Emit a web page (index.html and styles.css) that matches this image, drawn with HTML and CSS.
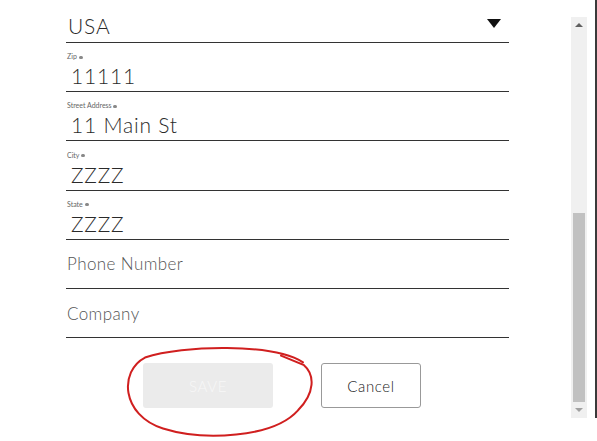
FILE: index.html
```html
<!doctype html>
<html>

<head>
    <meta charset="utf-8">
    <title>Address Form</title>
    <meta name="viewport" content="width=device-width,initial-scale=1">
    <link rel="stylesheet" href="styles.css">
</head>

<body>
    <div class="modal">
        <div class="content">
            <form class="form">
                <div class="field field-select">
                    <span class="value">USA</span>
                    <span class="caret"></span>
                </div>
                <div class="field">
                    <label class="label">Zip <span class="req"></span></label>
                    <span class="value">11111</span>
                </div>
                <div class="field">
                    <label class="label">Street Address <span class="req"></span></label>
                    <span class="value">11 Main St</span>
                </div>
                <div class="field">
                    <label class="label">City <span class="req"></span></label>
                    <span class="value">ZZZZ</span>
                </div>
                <div class="field">
                    <label class="label">State <span class="req"></span></label>
                    <span class="value">ZZZZ</span>
                </div>
                <div class="field field-empty">
                    <span class="placeholder">Phone Number</span>
                </div>
                <div class="field field-empty">
                    <span class="placeholder">Company</span>
                </div>

                <div class="actions">
                    <button type="button" class="btn btn-save" disabled>SAVE</button>
                    <button type="button" class="btn btn-cancel">Cancel</button>
                    <!-- hand drawn annotation round the save button -->
                    <svg class="scribble" viewBox="0 0 200 100" preserveAspectRatio="none" aria-hidden="true">
                        <path d="M180 17 C150 -3, 60 -1, 22 12 C-4 26, -2 72, 40 86 C80 99, 150 96, 175 67 C192 49, 192 30, 181 20 L158 10" />
                    </svg>
                </div>
            </form>
        </div>

        <div class="scrollbar">
            <span class="arrow arrow-up"></span>
            <div class="track">
                <div class="thumb"></div>
            </div>
            <span class="arrow arrow-down"></span>
        </div>
    </div>
</body>

</html>
```

FILE: styles.css
```css
body {
    margin: 0;
    width: 597px;
    height: 441px;
    overflow: hidden;
    background: #fff;
    font-family: Lato, "DejaVu Sans", sans-serif;
    color: #222;
}

.modal {
    display: flex;
    height: 418px;
    border-right: 2px solid #3a3a3a;
}

.content {
    flex: 1;
    padding-left: 66px;
    padding-right: 62px;
}

.form {
    width: 443px;
}

.field {
    display: flex;
    flex-direction: column;
    justify-content: flex-end;
    height: 48.2px;
    border-bottom: 1px solid #333;
}

.field-select {
    height: 42px;
    flex-direction: row;
    align-items: flex-end;
    justify-content: space-between;
}

.field-select .value {
    padding-left: 2px;
    padding-bottom: 1px;
}

.caret {
    width: 0;
    height: 0;
    border-left: 7px solid transparent;
    border-right: 7px solid transparent;
    border-top: 9px solid #111;
    margin-right: 8px;
    margin-bottom: 14px;
}

.label {
    font-size: 7px;
    color: #666;
    line-height: 10px;
    padding-left: 1px;
}

.req {
    display: inline-block;
    width: 4px;
    height: 3px;
    border-radius: 2px;
    background: #888;
    vertical-align: middle;
}

.value {
    font-size: 21px;
    font-weight: 300;
    line-height: 30px;
    padding-left: 5px;
    padding-bottom: 0;
    color: #2a2a2a;
    letter-spacing: 0.8px;
}

.field-empty {
    justify-content: center;
}

.placeholder {
    font-size: 17px;
    font-weight: 300;
    color: #555;
    letter-spacing: 0.4px;
    padding-left: 1px;
    padding-top: 0;
}

.actions {
    position: relative;
    display: flex;
    gap: 48px;
    padding-top: 25px;
    padding-left: 77px;
}

.btn {
    height: 45px;
    border-radius: 3px;
    font-family: Lato, "DejaVu Sans", sans-serif;
    font-size: 15px;
    font-weight: 300;
    letter-spacing: 0.6px;
    cursor: pointer;
}

.btn-save {
    width: 130px;
    background: #ebebeb;
    color: #f7f7f7;
    border: none;
}

.btn-cancel {
    width: 100px;
    background: #fff;
    color: #222;
    border: 1px solid #999;
}

.scribble {
    position: absolute;
    left: 57px;
    top: 8px;
    width: 200px;
    height: 96px;
    overflow: visible;
}

.scribble path {
    fill: none;
    stroke: #d01f1f;
    stroke-width: 2;
    stroke-linecap: round;
    vector-effect: non-scaling-stroke;
}

/* fake scrollbar */
.scrollbar {
    width: 16px;
    margin-top: 17px;
    margin-right: 8px;
    background: #f0f0f0;
    display: flex;
    flex-direction: column;
    align-items: center;
}

.track {
    flex: 1;
    width: 100%;
    display: flex;
    flex-direction: column;
    justify-content: flex-end;
    padding: 0 2px;
    box-sizing: border-box;
}

.thumb {
    height: 189px;
    background: #c1c1c1;
}

.arrow {
    width: 0;
    height: 0;
    border-left: 4px solid transparent;
    border-right: 4px solid transparent;
    margin: 6px 0;
}

.arrow-up {
    border-bottom: 4px solid #606060;
}

.arrow-down {
    border-top: 4px solid #a0a0a0;
}
```
